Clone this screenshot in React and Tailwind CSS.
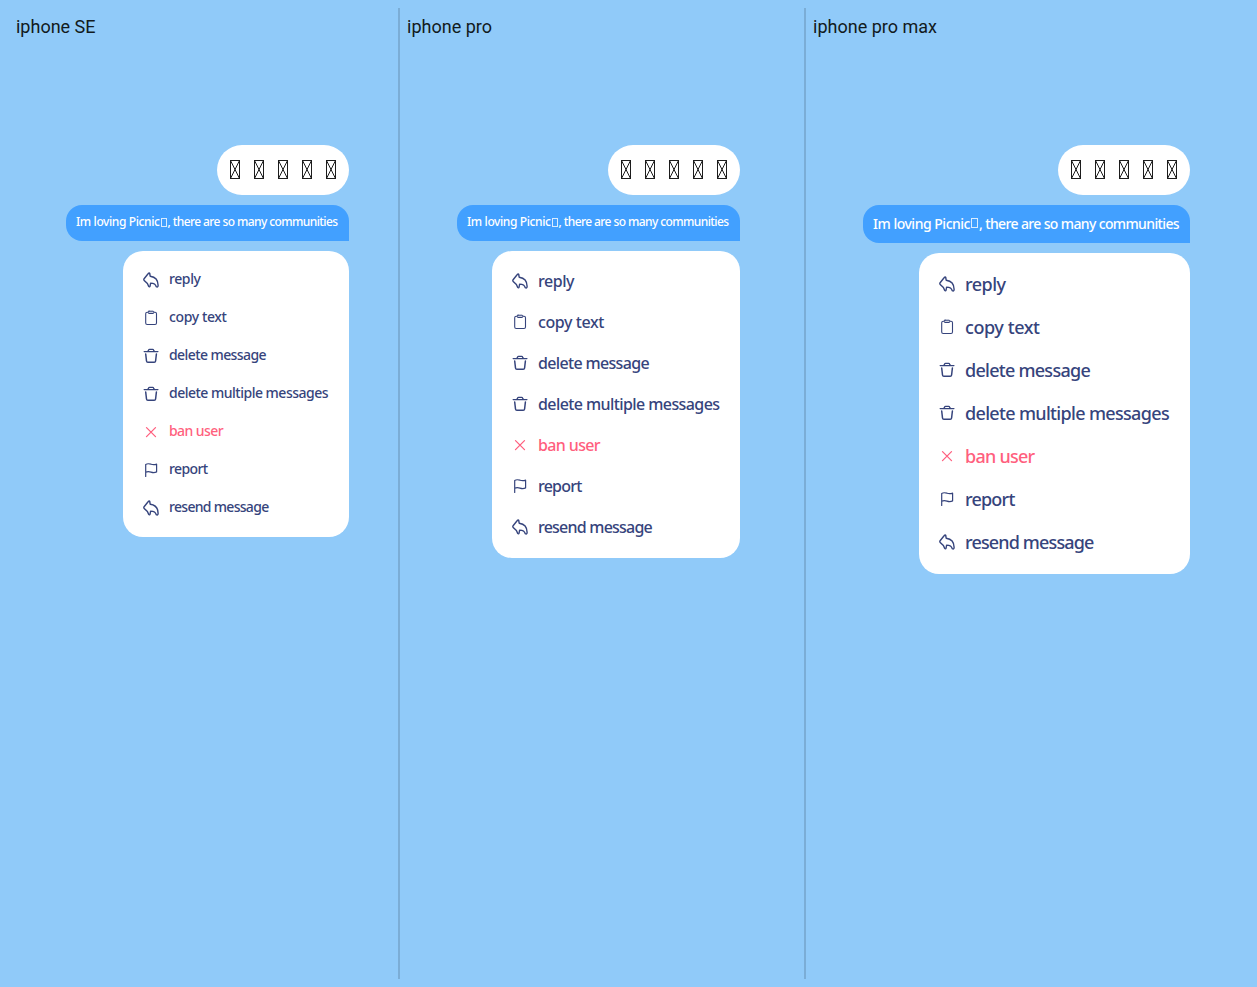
import { useLayoutEffect, useRef, useState } from "react";

// Tracks a line of text so that it fills the given width.
function FitText({ width, className = "", children }) {
  const ref = useRef(null);
  const [spacing, setSpacing] = useState(0);
  useLayoutEffect(() => {
    const natural = ref.current.getBoundingClientRect().width;
    setSpacing((width - natural) / children.length);
  }, []);
  return (
    <span ref={ref} className={`whitespace-pre ${className}`} style={{ letterSpacing: spacing }}>
      {children}
    </span>
  );
}

function Icon({ name }) {
  const shapes = {
    reply: (
      <path d="M6.2 1 C6.7 1.1 6.8 1.5 6.8 2 L7.2 4.2 C11.6 4.8 15.2 7.8 15.1 13.6 C15.1 15.1 14.2 15.3 13.2 14.7 C12.8 12.6 11.2 11.2 7.6 11.1 L7.1 14 C7 15 6.2 15.1 5.7 14.4 L4.4 11.5 L1.2 8.4 C.7 7.9 .7 7.3 1.1 6.7 L5.3 1.5 C5.6 1.1 5.9 1 6.2 1 Z" strokeWidth="1.4" />
    ),
    copy: (
      <>
        <rect x="2.7" y="2.2" width="10.8" height="12.3" rx="1.5" strokeWidth="1.1" />
        <rect x="5.2" y="1.2" width="5.6" height="2.3" rx="0.8" strokeWidth="1" fill="#ccd0df" />
      </>
    ),
    trash: (
      <>
        <path d="M1.2 3.6 H14.9 M5 3.4 L5.6 2 C5.8 1.5 6.1 1.4 6.5 1.4 H9.7 C10.1 1.4 10.4 1.5 10.6 2 L11.2 3.4" strokeWidth="1.4" />
        <path d="M2.7 6 L3.5 13 C3.6 13.9 4.1 14.3 4.9 14.3 H11.2 C12 14.3 12.5 13.9 12.6 13 L13.4 6" strokeWidth="1.5" />
      </>
    ),
    close: <path d="M3.5 3.6 L12.5 12.6 M12.5 3.6 L3.5 12.6" strokeWidth="1.3" />,
    flag: (
      <path d="M2.7 14.5 V2.4 C4.6 1.3 6.3 1.7 8 2.2 C9.8 2.8 11.4 2.9 13.6 2.1 V9.9 C11.6 10.9 9.8 10.7 8 10.1 C6.2 9.6 4.5 9.4 2.7 10.3" strokeWidth="1.2" />
    ),
  };
  return (
    <svg viewBox="0 0 16 16" className="h-4 w-4 shrink-0" fill="none" stroke="currentColor" strokeLinecap="round" strokeLinejoin="round">
      {shapes[name]}
    </svg>
  );
}

function Reaction() {
  return (
    <svg viewBox="0 0 10 19" className="h-[19px] w-[10px]" fill="none" stroke="#1c1c1c" strokeWidth="1">
      <rect x="0.5" y="0.5" width="9" height="18" />
      <path d="M0.5 0.5 L9.5 18.5 M9.5 0.5 L0.5 18.5" />
    </svg>
  );
}

const items = [
  ["reply", "reply"],
  ["copy", "copy text"],
  ["trash", "delete message"],
  ["trash", "delete multiple messages"],
  ["close", "ban user"],
  ["flag", "report"],
  ["reply", "resend message"],
];

const devices = [
  {
    title: "iphone SE", titleWidth: 79.5,
    column: "w-[390px] pl-2 pr-[49px]",
    bubble: "h-[36px] w-[283px] text-[12px] pb-[2px]", parts: [83.5, 170], box: "h-[9px] w-[6px]",
    menu: "w-[226px]", row: "h-[38px] text-[14px]", label: "pb-[2px]",
    widths: [31.5, 57.5, 97, 159, 54, 38.5, 99.5],
  },
  {
    title: "iphone pro", titleWidth: 85,
    column: "w-[404px] pl-[7px] pr-[64px]",
    bubble: "h-[36px] w-[283px] text-[12px] pb-[2px]", parts: [83.5, 170], box: "h-[9px] w-[6px]",
    menu: "w-[248px]", row: "h-[41px] pb-px text-[16px]", label: "pb-px",
    widths: [36, 66, 111, 181.5, 62, 43.5, 114],
  },
  {
    title: "iphone pro max", titleWidth: 124,
    column: "w-[443px] pl-[7px] pr-[59px]",
    bubble: "h-[38px] w-[327px] text-[14px] pb-[2px]", parts: [97, 200], box: "h-[10px] w-[7px]",
    menu: "w-[271px]", row: "h-[43px] pb-px text-[18px]", label: "pb-px",
    widths: [40.5, 74.5, 125, 204, 69.5, 49.5, 128.5],
  },
];

function Device({ d }) {
  return (
    <section className={`flex shrink-0 flex-col items-end ${d.column}`}>
      <h2 className="flex h-[137px] w-full items-start self-start pt-[5px] font-[Roboto,sans-serif] text-[18px] leading-[28px] text-[#121a20]">
        <FitText width={d.titleWidth}>{d.title}</FitText>
      </h2>
      <div className="flex h-[50px] w-[132px] items-center gap-[14px] rounded-full bg-white pb-px pl-[13px]">
        {[0, 1, 2, 3, 4].map((n) => <Reaction key={n} />)}
      </div>
      <div className={`mt-[10px] flex items-center rounded-[16px] rounded-br-none bg-[#42a0ff] pl-[10px] font-medium text-white ${d.bubble}`}>
        <FitText width={d.parts[0]}>Im loving Picnic</FitText>
        <span className={`ml-px mr-px shrink-0 border border-white/80 ${d.box}`} />
        <FitText width={d.parts[1]}>, there are so many communities</FitText>
      </div>
      <div className={`mt-[10px] rounded-[20px] bg-white py-[10px] pl-5 ${d.menu}`}>
        {items.map(([icon, label], i) => (
          <div key={label} className={`flex items-center gap-[10px] font-medium ${icon === "close" ? "text-[#ff5f7e]" : "text-[#36447c]"} ${d.row}`}>
            <Icon name={icon} />
            <FitText width={d.widths[i]} className={`leading-none ${d.label}`}>{label}</FitText>
          </div>
        ))}
      </div>
    </section>
  );
}

export default function App() {
  return (
    <main className="flex h-[987px] w-[1257px] overflow-hidden bg-[#90caf9] p-2 font-['Noto_Sans',sans-serif]">
      <Device d={devices[0]} />
      <div className="w-[2px] shrink-0 bg-[#7badd6]" />
      <Device d={devices[1]} />
      <div className="w-[2px] shrink-0 bg-[#7badd6]" />
      <Device d={devices[2]} />
    </main>
  );
}
